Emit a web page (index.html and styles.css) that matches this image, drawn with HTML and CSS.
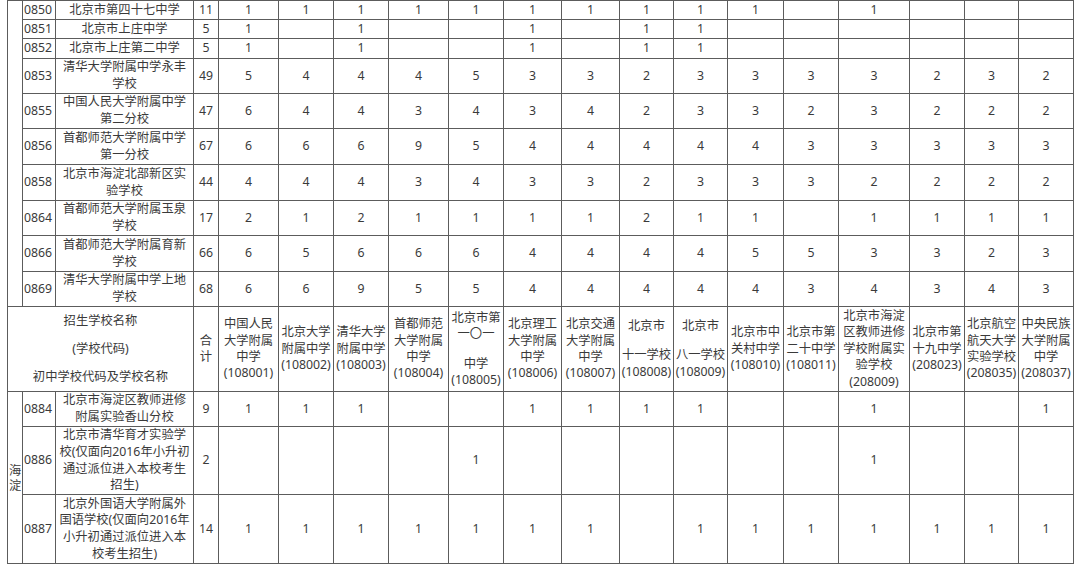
FILE: index.html
```html
<!DOCTYPE html>
<html lang="zh-CN">
<head>
<meta charset="utf-8">
<title>招生计划表</title>
<link rel="stylesheet" href="styles.css">
</head>
<body>
<div class="page">
<table class="grid">
<colgroup>
<col class="w15"><col class="w33"><col class="w138"><col class="w25">
<col class="w60"><col class="w55"><col class="w55"><col class="w60"><col class="w55">
<col class="w58"><col class="w58"><col class="w54"><col class="w54"><col class="w56">
<col class="w55"><col class="w71"><col class="w55"><col class="w54"><col class="w55">
</colgroup>
<tbody>
<tr class="h19"><td class="dist" rowspan="10"></td><td class="code">0850</td><td class="name">北京市第四十七中学</td><td class="sum">11</td><td>1</td><td>1</td><td>1</td><td>1</td><td>1</td><td>1</td><td>1</td><td>1</td><td>1</td><td>1</td><td></td><td>1</td><td></td><td></td><td></td></tr>
<tr class="h19"><td class="code">0851</td><td class="name">北京市上庄中学</td><td class="sum">5</td><td>1</td><td></td><td>1</td><td></td><td></td><td>1</td><td></td><td>1</td><td>1</td><td></td><td></td><td></td><td></td><td></td><td></td></tr>
<tr class="h20"><td class="code">0852</td><td class="name">北京市上庄第二中学</td><td class="sum">5</td><td>1</td><td></td><td>1</td><td></td><td></td><td>1</td><td></td><td>1</td><td>1</td><td></td><td></td><td></td><td></td><td></td><td></td></tr>
<tr class="h35"><td class="code">0853</td><td class="name">清华大学附属中学永丰<br>学校</td><td class="sum">49</td><td>5</td><td>4</td><td>4</td><td>4</td><td>5</td><td>3</td><td>3</td><td>2</td><td>3</td><td>3</td><td>3</td><td>3</td><td>2</td><td>3</td><td>2</td></tr>
<tr class="h35"><td class="code">0855</td><td class="name">中国人民大学附属中学<br>第二分校</td><td class="sum">47</td><td>6</td><td>4</td><td>4</td><td>3</td><td>4</td><td>3</td><td>4</td><td>2</td><td>3</td><td>3</td><td>2</td><td>3</td><td>2</td><td>2</td><td>2</td></tr>
<tr class="h36"><td class="code">0856</td><td class="name">首都师范大学附属中学<br>第一分校</td><td class="sum">67</td><td>6</td><td>6</td><td>6</td><td>9</td><td>5</td><td>4</td><td>4</td><td>4</td><td>4</td><td>4</td><td>3</td><td>3</td><td>3</td><td>3</td><td>3</td></tr>
<tr class="h36"><td class="code">0858</td><td class="name">北京市海淀北部新区实<br>验学校</td><td class="sum">44</td><td>4</td><td>4</td><td>4</td><td>3</td><td>4</td><td>3</td><td>3</td><td>2</td><td>3</td><td>3</td><td>3</td><td>2</td><td>2</td><td>2</td><td>2</td></tr>
<tr class="h35"><td class="code">0864</td><td class="name">首都师范大学附属玉泉<br>学校</td><td class="sum">17</td><td>2</td><td>1</td><td>2</td><td>1</td><td>1</td><td>1</td><td>1</td><td>2</td><td>1</td><td>1</td><td></td><td>1</td><td>1</td><td>1</td><td>1</td></tr>
<tr class="h36"><td class="code">0866</td><td class="name">首都师范大学附属育新<br>学校</td><td class="sum">66</td><td>6</td><td>5</td><td>6</td><td>6</td><td>6</td><td>4</td><td>4</td><td>4</td><td>4</td><td>5</td><td>5</td><td>3</td><td>3</td><td>2</td><td>3</td></tr>
<tr class="h35"><td class="code">0869</td><td class="name">清华大学附属中学上地<br>学校</td><td class="sum">68</td><td>6</td><td>6</td><td>9</td><td>5</td><td>5</td><td>4</td><td>4</td><td>4</td><td>4</td><td>4</td><td>3</td><td>4</td><td>3</td><td>4</td><td>3</td></tr>
<tr class="h84 head">
<td class="title" colspan="3">招生学校名称<br>(学校代码)<br>初中学校代码及学校名称</td>
<td class="sum">合<br>计</td>
<td>中国人民<br>大学附属<br>中学<br>(108001)</td>
<td>北京大学<br>附属中学<br>(108002)</td>
<td>清华大学<br>附属中学<br>(108003)</td>
<td>首都师范<br>大学附属<br>中学<br>(108004)</td>
<td>北京市第<br>一〇一<br><span class="gap"></span>中学<br>(108005)</td>
<td>北京理工<br>大学附属<br>中学<br>(108006)</td>
<td>北京交通<br>大学附属<br>中学<br>(108007)</td>
<td>北京市<br><span class="gap"></span>十一学校<br>(108008)</td>
<td>北京市<br><span class="gap"></span>八一学校<br>(108009)</td>
<td>北京市中<br>关村中学<br>(108010)</td>
<td>北京市第<br>二十中学<br>(108011)</td>
<td>北京市海淀<br>区教师进修<br>学校附属实<br>验学校<br>(208009)</td>
<td>北京市第<br>十九中学<br>(208023)</td>
<td>北京航空<br>航天大学<br>实验学校<br>(208035)</td>
<td>中央民族<br>大学附属<br>中学<br>(208037)</td>
</tr>
<tr class="h35"><td class="dist label" rowspan="3">海<br>淀</td><td class="code">0884</td><td class="name">北京市海淀区教师进修<br>附属实验香山分校</td><td class="sum">9</td><td>1</td><td>1</td><td>1</td><td></td><td></td><td>1</td><td>1</td><td>1</td><td>1</td><td></td><td></td><td>1</td><td></td><td></td><td>1</td></tr>
<tr class="h68"><td class="code">0886</td><td class="name">北京市清华育才实验学<br>校(仅面向2016年小升初<br>通过派位进入本校考生<br>招生)</td><td class="sum">2</td><td></td><td></td><td></td><td></td><td>1</td><td></td><td></td><td></td><td></td><td></td><td></td><td>1</td><td></td><td></td><td></td></tr>
<tr class="h69"><td class="code">0887</td><td class="name">北京外国语大学附属外<br>国语学校(仅面向2016年<br>小升初通过派位进入本<br>校考生招生)</td><td class="sum">14</td><td>1</td><td>1</td><td>1</td><td>1</td><td>1</td><td>1</td><td>1</td><td></td><td>1</td><td>1</td><td>1</td><td>1</td><td>1</td><td>1</td><td>1</td></tr>
</tbody>
</table>
</div>
</body>
</html>
```

FILE: styles.css
```css
html, body {
  margin: 0;
  padding: 0;
  background: #ffffff;
}

.page {
  padding: 0 0 0 7px;
}

.grid {
  border-collapse: collapse;
  table-layout: fixed;
  width: 1067px;
  font-family: "Noto Sans", "Noto Sans CJK SC", sans-serif;
  font-size: 12.3px;
  line-height: 16.4px;
  color: #3a3a3a;
}

.grid td {
  border: 1px solid #5c5c5c;
  padding: 0;
  text-align: center;
  vertical-align: middle;
  white-space: nowrap;
  overflow: hidden;
}

.w15 { width: 15px; }
.w25 { width: 25px; }
.w33 { width: 33px; }
.w54 { width: 54px; }
.w55 { width: 55px; }
.w56 { width: 56px; }
.w58 { width: 58px; }
.w60 { width: 60px; }
.w71 { width: 71px; }
.w138 { width: 138px; }

.h19 { height: 19px; }
.h20 { height: 20px; }
.h35 { height: 35px; }
.h36 { height: 36px; }
.h68 { height: 68px; }
.h69 { height: 69px; }
.h84 { height: 84px; }

.grid td.code {
  text-align: left;
  padding-left: 1px;
}

.grid td.name {
  line-height: 16.6px;
}

.grid td.title {
  line-height: 28px;
}

.grid td.label {
  text-align: left;
  padding-left: 1px;
  line-height: 15px;
}

.gap {
  display: block;
  height: 13px;
}
```
